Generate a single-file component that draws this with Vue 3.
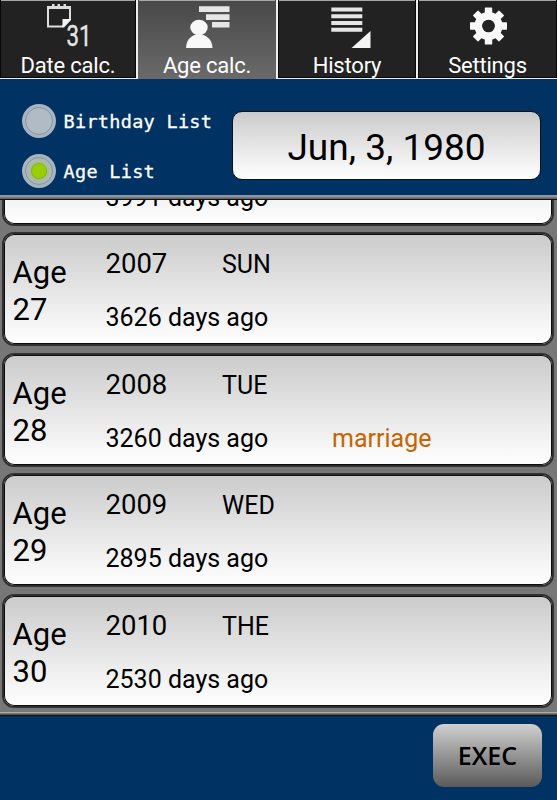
<script setup>
import { ref } from 'vue'

const tabs = [
  { id: 'date', label: 'Date calc.' },
  { id: 'age', label: 'Age calc.' },
  { id: 'history', label: 'History' },
  { id: 'settings', label: 'Settings' },
]
const activeTab = ref('age')

const modes = ['Birthday List', 'Age List']
const mode = ref('Age List')

const rows = [
  { age: 27, year: 2007, day: 'SUN', ago: 3626, note: '' },
  { age: 28, year: 2008, day: 'TUE', ago: 3260, note: 'marriage' },
  { age: 29, year: 2009, day: 'WED', ago: 2895, note: '' },
  { age: 30, year: 2010, day: 'THE', ago: 2530, note: '' },
]
const teeth = [0, 45, 90, 135, 180, 225, 270, 315]
</script>

<template>
  <div class="screen">
    <nav class="tabs">
      <button
        v-for="tab in tabs"
        :key="tab.id"
        class="tab"
        :class="{ active: tab.id === activeTab }"
        @click="activeTab = tab.id"
      >
        <svg v-if="tab.id === 'date'" class="icon" viewBox="0 0 48 48">
          <path d="M4 8V26.500H18.500L26 19V8Z" fill="none" stroke="#ddd" stroke-width="2" />
          <path d="M3 6H27V9H3ZM8 4H10.500V7H8ZM13.500 4H16V7H13.500ZM19.500 4H22V7H19.500Z" fill="#ddd" />
          <path d="M18.500 19H27V20L20 27.500H18.500Z" fill="#f4f4f4" />
          <text x="22.500" y="46" class="icon-num" textLength="25" lengthAdjust="spacingAndGlyphs">31</text>
        </svg>
        <svg v-else-if="tab.id === 'age'" class="icon" viewBox="0 0 48 48">
          <path d="M16 6.200H46.500V12H16ZM23 14.200H46.500V20H23ZM29 22H46.500V27.500H29Z" fill="#e6e6e6" />
          <ellipse cx="16" cy="27.500" rx="8.700" ry="7.800" fill="#f8f8f8" />
          <path d="M3 48C3.500 39 8.500 34.500 16 34.500S29 39 29.500 48Z" fill="#f8f8f8" />
        </svg>
        <svg v-else-if="tab.id === 'history'" class="icon" viewBox="0 0 48 48">
          <path d="M8.300 7.500H39.300V11.500H8.300ZM8.300 14.200H39.300V18.200H8.300ZM8.300 21H39.300V25H8.300ZM8.300 27.800H39.300V31.800H8.300Z" fill="#e6e6e6" />
          <path d="M47.500 31V48.500H28Z" fill="#f4f4f4" />
        </svg>
        <svg v-else class="icon" viewBox="0 0 48 48">
          <g fill="#f8f8f8" transform="translate(24.500 26)">
            <rect v-for="a in teeth" :key="a" x="-3.700" y="-18.500" width="7.400" height="12" rx="0.600" :transform="`rotate(${a})`" />
          </g>
          <circle cx="24.500" cy="26" r="10" fill="none" stroke="#f8f8f8" stroke-width="8" />
          <circle cx="24.500" cy="26" r="6.300" fill="#222" />
        </svg>
        <span class="tab-label">{{ tab.label }}</span>
      </button>
    </nav>

    <section class="controls">
      <div class="modes">
        <button v-for="m in modes" :key="m" class="mode" @click="mode = m">
          <span class="radio"><span class="well" :class="{ lit: m === mode }"></span></span>
          <span class="mode-label">{{ m }}</span>
        </button>
      </div>
      <button class="date">Jun, 3, 1980</button>
    </section>
    <div class="rule top"></div>

    <main class="viewport">
      <div class="list">
        <article class="card">
          <div class="age"></div>
          <div class="details">
            <div class="line"></div>
            <div class="line lower"><span class="ago">3991 days ago</span></div>
          </div>
        </article>
        <article v-for="row in rows" :key="row.age" class="card">
          <div class="age">Age<br />{{ row.age }}</div>
          <div class="details">
            <div class="line">
              <span class="year">{{ row.year }}</span>
              <span class="day">{{ row.day }}</span>
            </div>
            <div class="line lower">
              <span class="ago">{{ row.ago }} days ago</span>
              <span v-if="row.note" class="note">{{ row.note }}</span>
            </div>
          </div>
        </article>
      </div>
    </main>

    <div class="rule bottom"></div>
    <footer class="footer">
      <button class="exec">EXEC</button>
    </footer>
  </div>
</template>

<style>
body {
  margin: 0;
}
</style>

<style scoped>
.screen {
  display: flex;
  flex-direction: column;
  width: 557px;
  height: 800px;
  overflow: hidden;
  background: #003264;
  color: #000;
  font-family: Roboto, "Liberation Sans", sans-serif;
}
button {
  margin: 0;
  padding: 0;
  border: 0;
  background: none;
  font: inherit;
  color: inherit;
}
.tabs {
  display: grid;
  grid-template-columns: 136px 138px 138px 139px;
  gap: 2px;
  box-sizing: border-box;
  height: 79px;
  padding-bottom: 1px;
  background: #eee;
}
.tab {
  display: flex;
  flex-direction: column;
  align-items: center;
  height: 78px;
  border: solid #080808;
  border-width: 0 1px 1px;
  box-shadow: inset 0 1px #a3aaa5;
  background: #222;
  color: #fff;
}
.tab.active {
  height: 79px;
  border-color: transparent;
  background: #5b5b5b linear-gradient(#484848, #6a6a6a) border-box;
}
.icon {
  display: block;
  flex: none;
  width: 48px;
  height: 48px;
}
.icon-num {
  font: 400 29px Roboto, sans-serif;
  fill: #e6e6e6;
  stroke: #e6e6e6;
  stroke-width: 0.4px;
}
.tab-label {
  margin-top: 5px;
  font-size: 22px;
  line-height: 26px;
  letter-spacing: -0.2px;
  white-space: nowrap;
}
.controls {
  display: flex;
  justify-content: space-between;
  box-sizing: border-box;
  height: 116px;
  padding: 25px 16px 0 22px;
}
.modes {
  display: flex;
  flex-direction: column;
  gap: 16px;
}
.mode {
  display: flex;
  align-items: center;
  gap: 8px;
  height: 34px;
}
.radio {
  display: grid;
  place-items: center;
  width: 34px;
  height: 34px;
  border-radius: 50%;
  background: #a9b4bf;
}
.well {
  box-sizing: border-box;
  width: 28px;
  height: 28px;
  border: 1px solid #8795a3;
  border-radius: 50%;
  background: #b0bbc5;
}
.well.lit {
  background: radial-gradient(circle, #99cf00 0 6.5px, #83b51a 7.500px, #a9bd91 8.500px, #acb8bb 12px);
}
.mode-label {
  margin-left: -0.500px;
  color: #fff;
  font: 18.500px "DejaVu Sans Mono", monospace;
  letter-spacing: 0.3px;
  -webkit-text-stroke: 0.3px #fff;
  white-space: nowrap;
}
.date {
  box-sizing: border-box;
  width: 309px;
  height: 69px;
  margin-top: 7px;
  padding-top: 4px;
  border: 1px solid #111;
  border-radius: 10px;
  background: linear-gradient(#cbcbcb, #fff);
  font-size: 37px;
}
.rule {
  flex: none;
  height: 4px;
}
.rule.top {
  height: 5px;
  background: linear-gradient(#8e969f 0 2px, #777 2px 3px, #666 3px 4px, #111 4px);
}
.rule.bottom {
  background: linear-gradient(#aaa 0 1px, #777 1px 2px, #555 2px 3px, #111 3px);
}
.viewport {
  flex: none;
  height: 512px;
  overflow: hidden;
  background: #777;
}
.list {
  display: flex;
  flex-direction: column;
  gap: 6.500px;
  margin-top: -88.500px;
  padding: 0 3px 0 2px;
}
.card {
  display: flex;
  box-sizing: border-box;
  flex: none;
  height: 114px;
  border: 2px solid #303030;
  border-radius: 12px;
  background: linear-gradient(#cbcbcb, #fff) #fff;
  box-shadow: inset 0 0 0 1px #0c0c0c;
}
.age {
  width: 101.500px;
  box-sizing: border-box;
  padding: 20px 0 0 8.500px;
  font-size: 31px;
  line-height: 37px;
}
.details {
  flex: 1;
  padding-top: 13px;
}
.line {
  display: flex;
  align-items: baseline;
  height: 34px;
  line-height: 34px;
}
.lower {
  margin-top: 20px;
}
.year {
  width: 116.500px;
  font-size: 27.500px;
}
.day {
  font-size: 25px;
}
.ago {
  width: 226.500px;
  font-size: 25px;
}
.note {
  color: #c76400;
  font-size: 25px;
}
.footer {
  display: flex;
  justify-content: flex-end;
  box-sizing: border-box;
  height: 84px;
  padding: 8px 15px 0 0;
}
.exec {
  width: 109px;
  height: 63px;
  padding-bottom: 1px;
  border-radius: 11px;
  background: linear-gradient(#d0d0d0, #5a5a5a);
  font: 600 25px "Open Sans", "Noto Sans", sans-serif;
}
</style>
